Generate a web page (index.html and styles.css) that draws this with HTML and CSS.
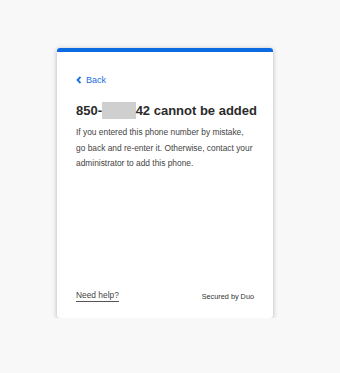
FILE: index.html
```html
<!DOCTYPE html>
<html>
<head>
<meta charset="utf-8">
<link rel="stylesheet" href="styles.css">
</head>
<body>
<div class="card">
  <div class="content">
    <a class="back" href="#"><svg class="chev" width="6" height="8" viewBox="0 0 6 8"><path d="M4.5 1 L1.5 4 L4.5 7" fill="none" stroke="currentColor" stroke-width="1.8"/></svg>Back</a>
    <h1 class="title">850-<span class="blur"></span>42 cannot be added</h1>
    <p class="body">If you entered this phone number by mistake,<br>go back and re-enter it. Otherwise, contact your<br>administrator to add this phone.</p>
  </div>
  <div class="footer">
    <a class="help" href="#">Need help?</a>
    <span class="secured">Secured by Duo</span>
  </div>
</div>
</body>
</html>
```
FILE: styles.css
```css
html, body { margin: 0; padding: 0; }
body {
  background: #f8f8f8;
  font-family: "Liberation Sans", Arial, sans-serif;
  color: #333;
}
.card {
  margin: 48px 0 0 57px;
  width: 216px;
  height: 270px;
  box-sizing: border-box;
  background: #fff;
  border-top: 4px solid #0c6be0;
  border-radius: 3px;
  box-shadow: 0 1px 5px rgba(0,0,0,0.28);
  display: flex;
  flex-direction: column;
  padding: 0 16px 0 19px;
}
.content { flex: 1; padding-top: 23px; }
.back {
  display: flex;
  align-items: center;
  gap: 4px;
  color: #1a6fe0;
  text-decoration: none;
  font-size: 9px;
}
.chev { display: block; }
.title {
  margin: 17px 0 0;
  font-size: 13px;
  font-weight: bold;
  color: #2b2b2b;
  display: flex;
  align-items: center;
  white-space: nowrap;
}
.blur {
  display: inline-block;
  width: 39px;
  height: 17px;
  background: #cfcfcf;
}
.body {
  margin: 6px 0 0;
  font-size: 8.4px;
  line-height: 15.5px;
  color: #444;
  white-space: nowrap;
}
.footer {
  display: flex;
  justify-content: space-between;
  align-items: center;
  padding: 0 3px 16px 0;
}
.help {
  font-size: 8.4px;
  color: #444;
  text-decoration: none;
  border-bottom: 1px solid #555;
  padding-bottom: 1px;
}
.secured { font-size: 7.3px; color: #333; }
```
